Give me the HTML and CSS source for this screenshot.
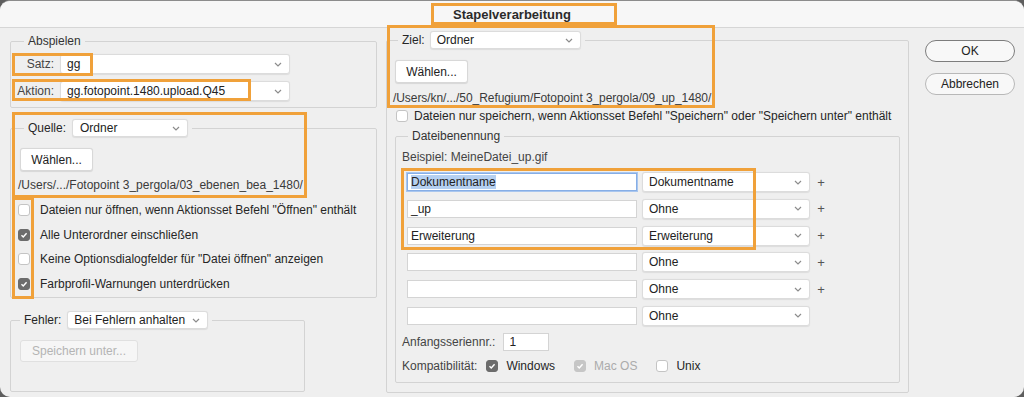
FILE: index.html
```html
<!DOCTYPE html>
<html lang="de">
<head>
<meta charset="utf-8">
<title>Stapelverarbeitung</title>
<link rel="stylesheet" href="styles.css">
</head>
<body>
<div class="window">
  <div class="titlebar">Stapelverarbeitung</div>
  <div class="main">
    <div class="col-left">
      <fieldset class="fs fs-play">
        <legend class="lg lg-text lg-play">Abspielen</legend>
        <div class="play-grid">
          <span class="lbl">Satz:</span>
          <div class="select sel-play"><span>gg</span><svg class="chev" viewBox="0 0 8 5"><path d="M1 1l3 3 3-3"/></svg></div>
          <span class="lbl">Aktion:</span>
          <div class="select sel-play"><span>gg.fotopoint.1480.upload.Q45</span><svg class="chev" viewBox="0 0 8 5"><path d="M1 1l3 3 3-3"/></svg></div>
        </div>
      </fieldset>

      <fieldset class="fs fs-src">
        <legend class="lg lg-ctl lg-src"><span>Quelle:</span>
          <div class="select sel-src"><span>Ordner</span><svg class="chev" viewBox="0 0 8 5"><path d="M1 1l3 3 3-3"/></svg></div>
        </legend>
        <div class="src-body">
          <div class="btn btn-choose">Wählen...</div>
          <div class="path path-src">/Users/.../Fotopoint 3_pergola/03_ebenen_bea_1480/</div>
          <div class="checks">
            <div class="check-row"><span class="cb"></span><span>Dateien nur öffnen, wenn Aktionsset Befehl "Öffnen" enthält</span></div>
            <div class="check-row"><span class="cb on"><svg viewBox="0 0 12 12"><path d="M3 6.3l2.1 2.1 4-4.6"/></svg></span><span>Alle Unterordner einschließen</span></div>
            <div class="check-row"><span class="cb"></span><span>Keine Optionsdialogfelder für "Datei öffnen" anzeigen</span></div>
            <div class="check-row"><span class="cb on"><svg viewBox="0 0 12 12"><path d="M3 6.3l2.1 2.1 4-4.6"/></svg></span><span>Farbprofil-Warnungen unterdrücken</span></div>
          </div>
        </div>
      </fieldset>

      <fieldset class="fs fs-err">
        <legend class="lg lg-ctl lg-err"><span>Fehler:</span>
          <div class="select sel-err"><span>Bei Fehlern anhalten</span><svg class="chev" viewBox="0 0 8 5"><path d="M1 1l3 3 3-3"/></svg></div>
        </legend>
        <div class="err-body">
          <div class="btn btn-save disabled">Speichern unter...</div>
        </div>
      </fieldset>
    </div>

    <div class="col-right">
      <fieldset class="fs fs-dest">
        <legend class="lg lg-ctl lg-dest"><span>Ziel:</span>
          <div class="select sel-dest"><span>Ordner</span><svg class="chev" viewBox="0 0 8 5"><path d="M1 1l3 3 3-3"/></svg></div>
        </legend>
        <div class="dest-body">
          <div class="btn btn-choose">Wählen...</div>
          <div class="path path-dest">/Users/kn/.../50_Refugium/Fotopoint 3_pergola/09_up_1480/</div>
          <div class="check-row save-row"><span class="cb"></span><span>Dateien nur speichern, wenn Aktionsset Befehl "Speichern" oder "Speichern unter" enthält</span></div>

          <fieldset class="fs fs-name">
            <legend class="lg lg-text lg-name">Dateibenennung</legend>
            <div class="name-body">
              <div class="example">Beispiel: MeineDatei_up.gif</div>
              <div class="name-rows">
                <div class="name-row">
                  <div class="input focus"><span class="hl">Dokumentname</span></div>
                  <div class="select sel-name"><span>Dokumentname</span><svg class="chev" viewBox="0 0 8 5"><path d="M1 1l3 3 3-3"/></svg></div>
                  <span class="plus">+</span>
                </div>
                <div class="name-row">
                  <div class="input"><span>_up</span></div>
                  <div class="select sel-name"><span>Ohne</span><svg class="chev" viewBox="0 0 8 5"><path d="M1 1l3 3 3-3"/></svg></div>
                  <span class="plus">+</span>
                </div>
                <div class="name-row">
                  <div class="input"><span>Erweiterung</span></div>
                  <div class="select sel-name"><span>Erweiterung</span><svg class="chev" viewBox="0 0 8 5"><path d="M1 1l3 3 3-3"/></svg></div>
                  <span class="plus">+</span>
                </div>
                <div class="name-row">
                  <div class="input"></div>
                  <div class="select sel-name"><span>Ohne</span><svg class="chev" viewBox="0 0 8 5"><path d="M1 1l3 3 3-3"/></svg></div>
                  <span class="plus">+</span>
                </div>
                <div class="name-row">
                  <div class="input"></div>
                  <div class="select sel-name"><span>Ohne</span><svg class="chev" viewBox="0 0 8 5"><path d="M1 1l3 3 3-3"/></svg></div>
                  <span class="plus">+</span>
                </div>
                <div class="name-row">
                  <div class="input"></div>
                  <div class="select sel-name"><span>Ohne</span><svg class="chev" viewBox="0 0 8 5"><path d="M1 1l3 3 3-3"/></svg></div>
                  <span class="plus"></span>
                </div>
              </div>
              <div class="serial-row">
                <span>Anfangsseriennr.:</span>
                <div class="input input-serial"><span>1</span></div>
              </div>
              <div class="compat-row">
                <span class="compat-label">Kompatibilität:</span>
                <span class="cb on"><svg viewBox="0 0 12 12"><path d="M3 6.3l2.1 2.1 4-4.6"/></svg></span>
                <span class="compat-text">Windows</span>
                <span class="cb on dis"><svg viewBox="0 0 12 12"><path d="M3 6.3l2.1 2.1 4-4.6"/></svg></span>
                <span class="compat-text dis-text">Mac OS</span>
                <span class="cb"></span>
                <span class="compat-text">Unix</span>
              </div>
            </div>
          </fieldset>
        </div>
      </fieldset>
    </div>

    <div class="col-buttons">
      <div class="pill pill-ok">OK</div>
      <div class="pill pill-cancel">Abbrechen</div>
    </div>
  </div>

  <div class="mark mark-title"></div>
  <div class="mark mark-satz"></div>
  <div class="mark mark-aktion"></div>
  <div class="mark mark-quelle"></div>
  <div class="mark mark-checks"></div>
  <div class="mark mark-ziel"></div>
  <div class="mark mark-rows"></div>
</div>
</body>
</html>
```

FILE: styles.css
```css
* { box-sizing: border-box; }

html, body {
  margin: 0;
  padding: 0;
  background: #5e5e5e;
}

body {
  font-family: "Liberation Sans", Arial, sans-serif;
  font-size: 12px;
  color: #262626;
}

.window {
  position: relative;
  width: 1024px;
  height: 397px;
  background: #efefef;
  border-radius: 10px;
  overflow: hidden;
  border-top: 1px solid #8c8c8c;
}

.titlebar {
  height: 27px;
  background: #f7f7f7;
  border-bottom: 1px solid #d6d6d6;
  text-align: center;
  font-weight: bold;
  font-size: 13px;
  line-height: 27px;
  color: #2b2b2b;
}

.main {
  display: flex;
  padding-left: 10px;
}

.col-left {
  width: 367px;
  display: flex;
  flex-direction: column;
}

.col-right {
  width: 523px;
  margin-left: 9px;
}

.col-buttons {
  margin-left: 16px;
  margin-top: 12px;
  display: flex;
  flex-direction: column;
  gap: 11px;
}

/* fieldsets */
.fs {
  margin: 0;
  padding: 0;
  min-width: 0;
  border: 1px solid #d3d3d3;
  border-radius: 2px;
}

.lg {
  padding: 0 4px;
}

.lg-text {
  line-height: 14px;
  color: #333;
}

.lg-ctl {
  display: flex;
  align-items: center;
  gap: 6px;
  height: 18px;
}

.fs-play { margin-top: 6px; }
.lg-play { margin-left: 13px; }

.play-grid {
  display: grid;
  grid-template-columns: 43px 230px;
  column-gap: 6px;
  row-gap: 7px;
  padding: 6px 0 6px 0;
  align-items: center;
}

.lbl {
  text-align: right;
  color: #444;
}

/* selects */
.select {
  display: flex;
  align-items: center;
  justify-content: space-between;
  height: 20px;
  background: #fff;
  border: 1px solid #dcdcdc;
  border-radius: 3px;
  padding: 0 7px 0 6px;
  box-shadow: 0 0.5px 1px rgba(0,0,0,0.08);
  color: #222;
  white-space: nowrap;
}

.chev {
  width: 8px;
  height: 5px;
  flex: none;
}

.chev path {
  fill: none;
  stroke: #8c8c8c;
  stroke-width: 1.2;
}

.sel-play { width: 230px; }

.fs-src { margin-top: 11px; }
.lg-src { margin-left: 13px; }
.sel-src { width: 116px; height: 18px; padding-left: 7px; }

.src-body {
  padding: 11px 0 1px 9px;
}

.btn {
  display: flex;
  align-items: center;
  justify-content: center;
  height: 23px;
  background: #fff;
  border: 1px solid #d8d8d8;
  border-radius: 3px;
  box-shadow: 0 0.5px 1px rgba(0,0,0,0.1);
  color: #222;
}

.btn-choose { width: 73px; }

.path {
  line-height: 16px;
  color: #3a3a3a;
  white-space: nowrap;
}

.path-src {
  margin-top: 6px;
  margin-left: -2px;
}

.checks {
  margin-top: 5px;
  margin-left: -2px;
}

.check-row {
  display: flex;
  align-items: center;
  gap: 10px;
  height: 24.5px;
  padding-left: 0;
  white-space: nowrap;
}

.cb {
  width: 12px;
  height: 12px;
  flex: none;
  border: 1px solid #c4c4c4;
  border-radius: 3px;
  background: #fff;
  display: flex;
  align-items: center;
  justify-content: center;
}

.cb.on {
  background: #6c6c6c;
  border-color: #6c6c6c;
}

.cb.on.dis {
  background: #c6c6c6;
  border-color: #c6c6c6;
}

.cb svg {
  width: 12px;
  height: 12px;
}

.cb svg path {
  fill: none;
  stroke: #fff;
  stroke-width: 1.7;
}

.fs-err {
  margin-top: 13px;
  width: 295px;
}

.lg-err { margin-left: 9px; }
.sel-err { width: 141px; height: 18px; }

.err-body {
  padding: 11px 0 29px 9px;
}

.btn-save {
  width: 118px;
  height: 22px;
}

.btn.disabled {
  color: #b4b4b4;
  background: #f6f6f6;
  border-color: #e0e0e0;
  box-shadow: none;
}

/* right column */
.fs-dest { margin-top: 3px; }
.lg-dest { margin-left: 11px; gap: 5px; }
.sel-dest { width: 151px; height: 18px; }

.dest-body {
  padding: 11px 8px 9px 8px;
}

.path-dest {
  margin-top: 7px;
  margin-left: -2px;
  letter-spacing: -0.07px;
}

.save-row {
  height: 19px;
  margin-left: 1px;
  gap: 6px;
}

.fs-name {
  margin-top: 4px;
}

.lg-name { margin-left: 12px; }

.name-body {
  padding: 6px 0 8px 6px;
}

.example {
  line-height: 16px;
  color: #444;
}

.name-rows {
  margin-top: 7px;
  display: flex;
  flex-direction: column;
  gap: 6.8px;
}

.name-row {
  display: flex;
  align-items: center;
  height: 20px;
  padding-left: 5px;
}

.input {
  width: 230px;
  height: 18px;
  background: #fff;
  border: 1px solid #d4d4d4;
  padding-left: 3px;
  line-height: 16px;
  color: #222;
  white-space: nowrap;
}

.input.focus {
  border: 1px solid #86aee6;
  box-shadow: 0 0 0 1px #a9c6ee;
}

.hl {
  background: #b5d0f1;
}

.sel-name {
  width: 168px;
  margin-left: 5px;
}

.plus {
  width: 16px;
  margin-left: 3px;
  text-align: center;
  font-size: 13px;
  color: #555;
}

.serial-row {
  margin-top: 7px;
  display: flex;
  align-items: center;
  height: 18px;
  color: #444;
}

.input-serial {
  width: 46px;
  margin-left: 8px;
  padding-left: 5px;
}

.compat-row {
  margin-top: 7px;
  display: flex;
  align-items: center;
  height: 16px;
  white-space: nowrap;
}

.compat-label {
  color: #444;
  margin-right: 9px;
}

.compat-text {
  margin-left: 8px;
  margin-right: 19px;
}

.dis-text { color: #ababab; }

/* dialog buttons */
.pill {
  width: 90px;
  height: 22px;
  border-radius: 11px;
  background: #f8f8f8;
  display: flex;
  align-items: center;
  justify-content: center;
  color: #222;
}

.pill-ok { border: 1px solid #7d7d7d; }
.pill-cancel { border: 1px solid #b8b8b8; }

/* orange annotation overlays */
.mark {
  position: absolute;
  border: 3px solid #f0a13a;
  pointer-events: none;
}

.mark-title  { left: 431px; top: 2px;   width: 186px; height: 22px; }
.mark-satz   { left: 12px;  top: 52px;  width: 81px;  height: 23px; }
.mark-aktion { left: 12px;  top: 78px;  width: 239px; height: 22px; }
.mark-quelle { left: 12px;  top: 111px; width: 295px; height: 86px; }
.mark-checks { left: 12px;  top: 196px; width: 22px;  height: 102px; }
.mark-ziel   { left: 387px; top: 24px;  width: 328px; height: 83px; }
.mark-rows   { left: 401px; top: 167px; width: 355px; height: 82px; }
```
